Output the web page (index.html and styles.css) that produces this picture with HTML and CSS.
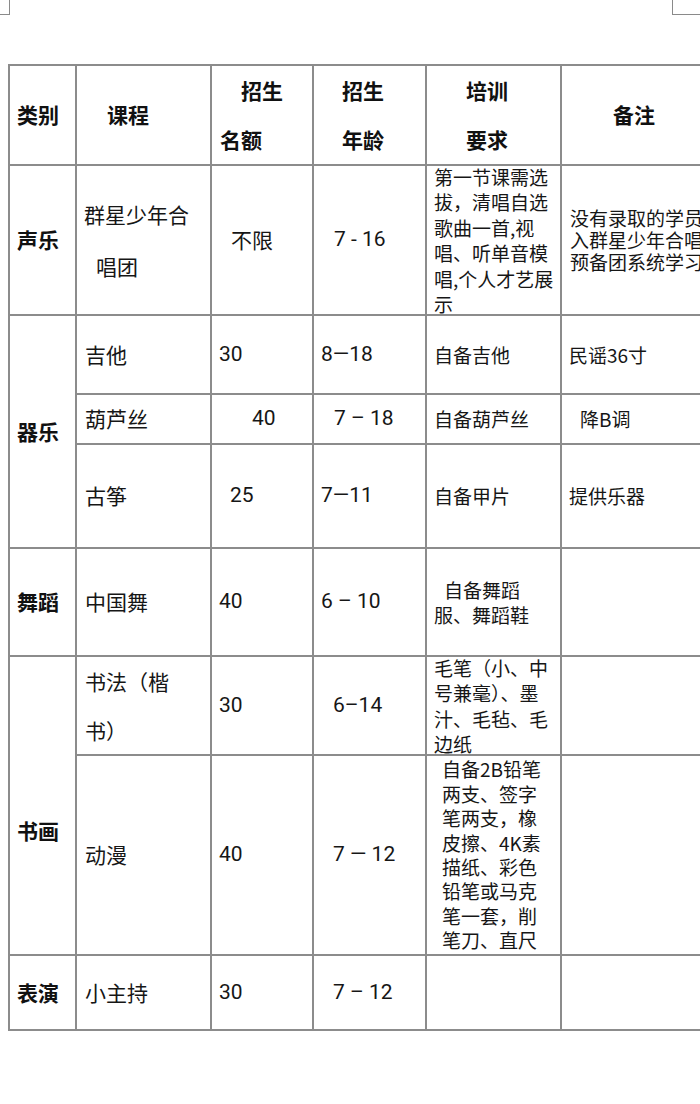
FILE: index.html
```html
<!DOCTYPE html>
<html lang="zh-CN">
<head>
<meta charset="utf-8">
<title>课程表</title>
<link rel="stylesheet" href="styles.css">
</head>
<body>
<div class="marks">
  <div class="mark-left"></div>
  <div class="mark-right"></div>
</div>
<table class="grid">
  <colgroup>
    <col class="c1"><col class="c2"><col class="c3"><col class="c4"><col class="c5"><col class="c6">
  </colgroup>
  <tr class="r-head">
    <td class="head p7">类别</td>
    <td class="head p30">课程</td>
    <td class="head two"><div class="p29">招生</div><div class="p8">名额</div></td>
    <td class="head two p28"><div>招生</div><div>年龄</div></td>
    <td class="head two p39"><div>培训</div><div>要求</div></td>
    <td class="head p51">备注</td>
  </tr>
  <tr class="r-sy">
    <td class="cat p7">声乐</td>
    <td class="tall"><div class="p7">群星少年合</div><div class="p19">唱团</div></td>
    <td class="p19">不限</td>
    <td class="num p20">7 - 16</td>
    <td class="req p7"><div class="squeeze">第一节课需选<br>拔，清唱自选<br>歌曲一首,视<br>唱、听单音模<br>唱,个人才艺展<br>示</div></td>
    <td class="note p8">没有录取的学员可进<br>入群星少年合唱团<br>预备团系统学习</td>
  </tr>
  <tr class="r-jt">
    <td class="cat p7" rowspan="3">器乐</td>
    <td class="p8">吉他</td>
    <td class="num p7">30</td>
    <td class="num p7">8—18</td>
    <td class="req p7">自备吉他</td>
    <td class="req p7">民谣36寸</td>
  </tr>
  <tr class="r-hls">
    <td class="p8">葫芦丝</td>
    <td class="num p40">40</td>
    <td class="num p20">7 – 18</td>
    <td class="req p7">自备葫芦丝</td>
    <td class="req p18">降B调</td>
  </tr>
  <tr class="r-gz">
    <td class="p8">古筝</td>
    <td class="num p18">25</td>
    <td class="num p7">7—11</td>
    <td class="req p7">自备甲片</td>
    <td class="req p7">提供乐器</td>
  </tr>
  <tr class="r-wd">
    <td class="cat p7">舞蹈</td>
    <td class="p8">中国舞</td>
    <td class="num p7">40</td>
    <td class="num p7">6 – 10</td>
    <td class="req"><div class="p17">自备舞蹈</div><div class="p7">服、舞蹈鞋</div></td>
    <td></td>
  </tr>
  <tr class="r-sf">
    <td class="cat cat-low p7" rowspan="2">书画</td>
    <td class="tall2"><div class="squeeze"><div class="p8">书法（楷</div><div class="p8">书）</div></div></td>
    <td class="num p7">30</td>
    <td class="num p19">6–14</td>
    <td class="req p7"><div class="squeeze">毛笔（小、中<br>号兼毫）、墨<br>汁、毛毡、毛<br>边纸</div></td>
    <td></td>
  </tr>
  <tr class="r-dm">
    <td class="p8">动漫</td>
    <td class="num p7">40</td>
    <td class="num p19">7 — 12</td>
    <td class="req req-tight p15"><div class="squeeze">自备2B铅笔<br>两支、签字<br>笔两支，橡<br>皮擦、4K素<br>描纸、彩色<br>铅笔或马克<br>笔一套，削<br>笔刀、直尺</div></td>
    <td></td>
  </tr>
  <tr class="r-by">
    <td class="cat p7">表演</td>
    <td class="p8">小主持</td>
    <td class="num p7">30</td>
    <td class="num p19">7 – 12</td>
    <td></td>
    <td></td>
  </tr>
</table>
</body>
</html>
```

FILE: styles.css
```css
html, body {
  margin: 0;
  padding: 0;
  background: #ffffff;
  overflow: hidden;
}
body {
  width: 700px;
  height: 1104px;
  font-family: "Noto Sans CJK SC", "Noto Sans", sans-serif;
  color: #161616;
}
.marks {
  display: flex;
  justify-content: space-between;
  height: 15px;
}
.mark-left {
  width: 9px;
  height: 14px;
  border-right: 1px solid #8a8a8a;
  border-bottom: 1px solid #8a8a8a;
}
.mark-right {
  width: 27px;
  height: 14px;
  border-left: 1px solid #8a8a8a;
  border-bottom: 1px solid #8a8a8a;
}
.grid {
  margin: 49px 0 0 8px;
  border-collapse: collapse;
  table-layout: fixed;
  width: 772px;
  font-size: 21px;
}
.c1 { width: 67px; }
.c2 { width: 135px; }
.c3 { width: 102px; }
.c4 { width: 113px; }
.c5 { width: 135px; }
.c6 { width: 220px; }
td {
  padding: 0;
}
.grid td {
  border: 2px solid #8c8c8c;
  vertical-align: middle;
  white-space: nowrap;
  line-height: 1.2;
}
.r-head { height: 99px; }
.r-sy { height: 150px; }
.r-jt { height: 79px; }
.r-hls { height: 50px; }
.r-gz { height: 104px; }
.r-wd { height: 108px; }
.r-sf { height: 99px; }
.r-dm { height: 200px; }
.r-by { height: 75px; }

.head, .cat { font-weight: 700; color: #111; }
.grid td.two { line-height: 49px; }
.grid td.tall { line-height: 52px; }
.grid td.tall2 { line-height: 49px; }
.num { font-family: Roboto, "Noto Sans CJK SC", sans-serif; }
.grid td.req { font-size: 19px; line-height: 25.5px; }
.grid td.req-tight { line-height: 24.4px; }
.grid td.note { font-size: 19px; line-height: 22px; }
.grid td.cat-low { padding-top: 50px; }
.squeeze { margin: -6px 0; }

.p7 { padding-left: 7px; }
.p8 { padding-left: 8px; }
.p15 { padding-left: 15px; }
.p17 { padding-left: 17px; }
.p18 { padding-left: 18px; }
.p19 { padding-left: 19px; }
.p20 { padding-left: 20px; }
.p28 { padding-left: 28px; }
.p29 { padding-left: 29px; }
.p30 { padding-left: 30px; }
.p39 { padding-left: 39px; }
.p40 { padding-left: 40px; }
.p51 { padding-left: 51px; }
```
